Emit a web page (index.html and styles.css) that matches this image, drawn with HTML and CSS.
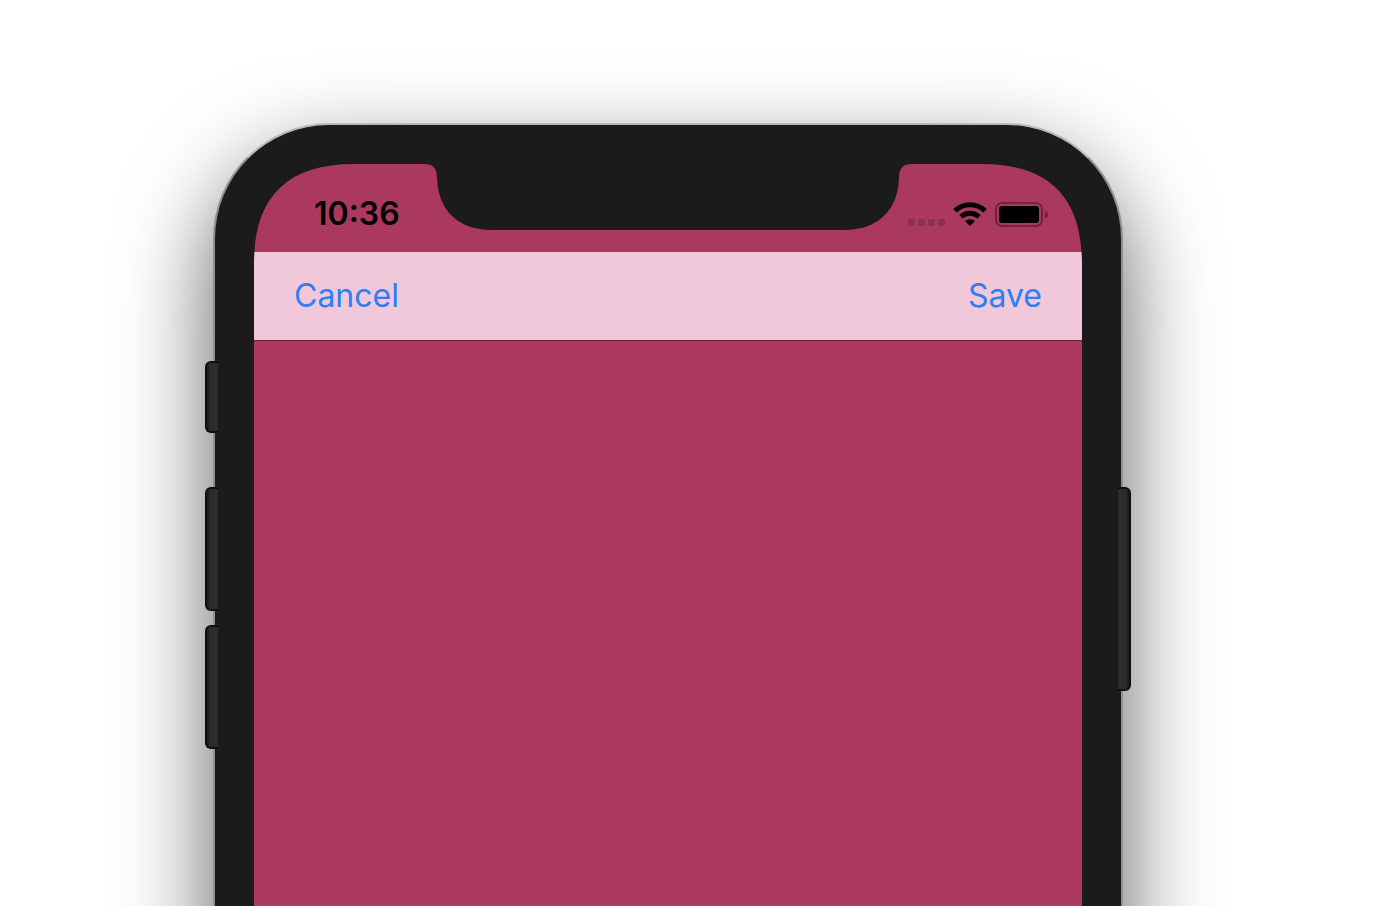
FILE: index.html
```
<!DOCTYPE html>
<html lang="en">
<head>
<meta charset="utf-8">
<title>Phone</title>
<link rel="stylesheet" href="styles.css">
</head>
<body>
<main class="stage">
  <div class="phone">
    <span class="key key-mute"></span>
    <span class="key key-up"></span>
    <span class="key key-down"></span>
    <span class="key key-power"></span>
    <div class="screen">
      <svg class="corner corner-left" viewBox="0 0 100 100" aria-hidden="true"><path d="M0 0H100C33 0 0 33 0 100Z"/></svg>
      <svg class="corner corner-right" viewBox="0 0 100 100" aria-hidden="true"><path d="M0 0H100C33 0 0 33 0 100Z"/></svg>
      <svg class="notch" viewBox="0 0 492 66" aria-hidden="true"><path d="M0 0H2C11 0 15 4 15 14C16 46 36 66 70 66H422C456 66 476 46 477 14C477 4 481 0 490 0H492Z"/></svg>
      <div class="status">
        <time class="clock">10:36</time>
        <div class="indicators">
          <svg class="signal" viewBox="0 0 37 7" aria-hidden="true"><rect width="7" height="7" rx="2"/><rect x="10" width="7" height="7" rx="2"/><rect x="20" width="7" height="7" rx="2"/><rect x="30" width="7" height="7" rx="2"/></svg>
          <svg class="wifi" viewBox="0 0 34 24" aria-hidden="true"><path d="M2 8.8A21.5 21.5 0 0 1 32 8.8M8 14.8A13 13 0 0 1 26 14.8"/><path class="wifi-dot" d="M17 24L12 19Q17 15.400 22 19Z"/></svg>
          <svg class="battery" viewBox="0 0 54 25" aria-hidden="true"><rect class="battery-case" x="1" y="1" width="46" height="23" rx="6"/><rect x="4" y="4" width="40" height="17" rx="3"/><path class="battery-tip" d="M50 8.500Q53 9.500 53 12.500Q53 15.500 50 16.500Z"/></svg>
        </div>
      </div>
      <nav class="bar">
        <button class="action" type="button">Cancel</button>
        <button class="action" type="button">Save</button>
      </nav>
    </div>
  </div>
</main>
</body>
</html>
```
FILE: styles.css
```
* {
  box-sizing: border-box;
}

body {
  margin: 0;
  background: #fff;
  font-family: Inter, "Liberation Sans", sans-serif;
}

.stage {
  display: flex;
  height: 100vh;
  padding: 123px 263px 0 213px;
  overflow: hidden;
}

.phone {
  position: relative;
  display: flex;
  flex: 1;
  min-height: 1600px;
  padding: 39px;
  border: 2px solid #8f9090;
  border-top-color: #b9bbba;
  border-radius: 116px;
  background: #1b1b1b;
  box-shadow: 0 38px 92px rgba(0, 0, 0, 0.63);
}

.screen {
  position: relative;
  flex: 1;
  background: #ab395f;
}

.corner {
  position: absolute;
  z-index: 1;
  top: 0;
  width: 100px;
  height: 100px;
  fill: #1b1b1b;
}

.corner-left {
  left: 0;
}

.corner-right {
  right: 0;
  transform: scaleX(-1);
}

.notch {
  position: absolute;
  top: 0;
  left: 50%;
  width: 492px;
  height: 66px;
  margin-left: -246px;
  fill: #1b1b1b;
}

.status {
  display: flex;
  align-items: flex-start;
  justify-content: space-between;
  height: 88px;
  padding: 30px 33px 0 60px;
}

.clock {
  font-size: 32px;
  font-weight: 600;
  line-height: 40px;
}

.indicators {
  display: flex;
  align-items: center;
  gap: 8px;
  height: 40px;
}

.signal {
  width: 37px;
  height: 7px;
  margin-top: 16px;
  fill: #8c3053;
}

.wifi {
  width: 34px;
  height: 24px;
  fill: none;
  stroke: #000;
  stroke-width: 5;
}

.wifi-dot {
  fill: #000;
  stroke: none;
}

.battery {
  width: 54px;
  height: 25px;
}

.battery-case {
  fill: none;
  stroke: #6f2340;
  stroke-width: 2;
}

.battery-tip {
  fill: #6f2340;
}

.bar {
  display: flex;
  align-items: center;
  justify-content: space-between;
  height: 89px;
  padding: 0 40px;
  border-bottom: 1px solid #70233f;
  background: #f1c8da;
}

.action {
  padding: 0;
  border: 0;
  background: none;
  color: #2c7ff7;
  font: 400 32px/44px Inter, "Liberation Sans", sans-serif;
}

.key {
  position: absolute;
  z-index: 1;
  left: -10px;
  width: 13px;
  border: 2px solid #0e0e0e;
  border-right: 0;
  border-radius: 6px 0 0 6px;
  background: linear-gradient(90deg, #1f1f1f 2px, #2c2c2c 2px);
}

.key-mute {
  top: 236px;
  height: 72px;
}

.key-up {
  top: 362px;
  height: 124px;
}

.key-down {
  top: 500px;
  height: 124px;
}

.key-power {
  top: 362px;
  right: -10px;
  left: auto;
  height: 204px;
  transform: scaleX(-1);
}
```
